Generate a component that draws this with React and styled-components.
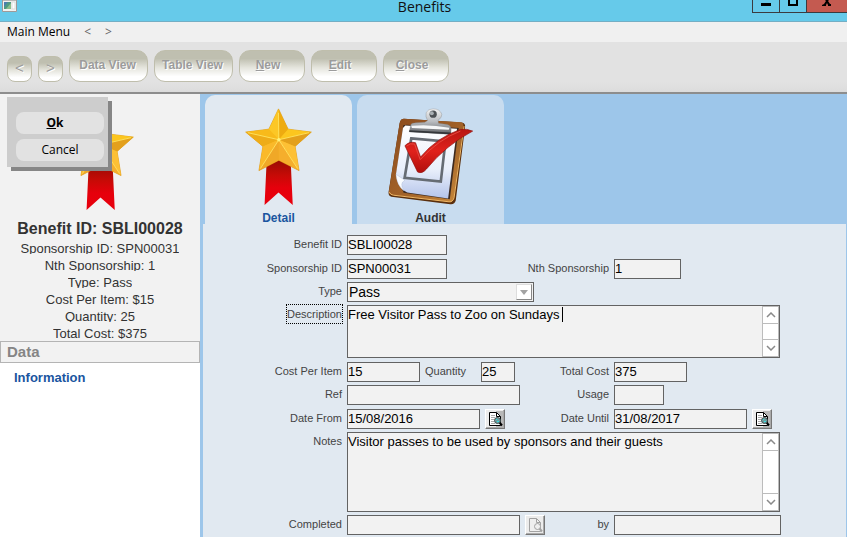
import styled, { createGlobalStyle } from "styled-components";
import React, { useState } from "react";

const GlobalStyle = createGlobalStyle`
  * { box-sizing: border-box; }
  body {
    margin: 0;
    font-family: "Liberation Sans", Arial, sans-serif;
    font-size: 13px;
    color: #111;
  }
  button, input, select, textarea { font-family: inherit; margin: 0; }
`;

function StarIcon() {
  return (
    <svg width="67" height="98" viewBox="130 55 202 294" aria-hidden="true">
      <defs>
        <linearGradient id="ribbon" x1="0" y1="0" x2="0" y2="1">
          <stop offset="0" stopColor="#8e0d04" />
          <stop offset="0.4" stopColor="#c80a06" />
          <stop offset="0.65" stopColor="#e6000c" />
          <stop offset="1" stopColor="#e8000d" />
        </linearGradient>
        <linearGradient id="gold" x1="0" y1="0" x2="0" y2="1">
          <stop offset="0" stopColor="#f5b914" />
          <stop offset="0.5" stopColor="#fbc01c" />
          <stop offset="1" stopColor="#ee9f22" />
        </linearGradient>
      </defs>
      <path d="M196 200 L267 200 L274 347 L231 309 L189 347 Z" fill="url(#ribbon)" />
      <path
        d="M231 57 L260 118 L330 127 L281 170 L293 243 L232 212 L172 243 L184 170 L132 127 L202 118 Z"
        fill="url(#gold)"
        stroke="#d9940f"
        strokeWidth="2"
        strokeLinejoin="round"
      />
      <path d="M231 57 L260 118 L232 150 Z" fill="#eeab10" />
      <path d="M231 57 L202 118 L232 150 Z" fill="#fcc726" />
      <path d="M132 127 L202 118 L232 150 Z" fill="#f8ba1a" />
      <path d="M132 127 L184 170 L232 150 Z" fill="#eeac18" />
      <path d="M330 127 L260 118 L232 150 Z" fill="#fcc61e" />
      <path d="M330 127 L281 170 L232 150 Z" fill="#e3a01c" />
      <path d="M172 243 L184 170 L232 150 Z" fill="#fab92a" />
      <path d="M172 243 L232 212 L232 150 Z" fill="#f0a827" />
      <path d="M293 243 L281 170 L232 150 Z" fill="#fdc035" />
      <path d="M293 243 L232 212 L232 150 Z" fill="#f5ae2c" />
      <g stroke="#ffe868" strokeWidth="2.5" strokeLinecap="round">
        <path d="M232 150 L231 70 M232 150 L140 129 M232 150 L322 129 M232 150 L177 236 M232 150 L288 236" />
      </g>
      <circle cx="232" cy="150" r="5" fill="#fff37a" />
    </svg>
  );
}

function ClipboardIcon() {
  return (
    <svg width="85" height="98" viewBox="118 52 256 294" aria-hidden="true">
      <defs>
        <linearGradient id="board" x1="0" y1="0" x2="1" y2="1">
          <stop offset="0" stopColor="#8a4a1c" />
          <stop offset="0.6" stopColor="#a5652a" />
          <stop offset="1" stopColor="#c98a3c" />
        </linearGradient>
        <linearGradient id="paper" x1="0" y1="0" x2="0" y2="1">
          <stop offset="0" stopColor="#ffffff" />
          <stop offset="0.6" stopColor="#e9effb" />
          <stop offset="1" stopColor="#b4c4ea" />
        </linearGradient>
        <linearGradient id="metal" x1="0" y1="0" x2="0" y2="1">
          <stop offset="0" stopColor="#f4f4f4" />
          <stop offset="0.5" stopColor="#b9bcc0" />
          <stop offset="1" stopColor="#5d6064" />
        </linearGradient>
        <linearGradient id="tick" x1="0" y1="0" x2="0" y2="1">
          <stop offset="0" stopColor="#b81712" />
          <stop offset="0.5" stopColor="#e0221c" />
          <stop offset="1" stopColor="#b10f0d" />
        </linearGradient>
      </defs>
      <path
        d="M166 84 L340 95 Q352 97 350 110 L322 330 Q319 342 306 341 L128 319 Q118 316 120 303 L153 97 Q156 84 166 84 Z"
        fill="#5a2f0d"
      />
      <path
        d="M166 84 L338 94 Q347 96 345 108 L316 325 Q313 336 302 334 L128 313 Q118 311 121 300 L153 97 Q156 84 166 84 Z"
        fill="url(#board)"
      />
      <path d="M122 305 Q126 313 134 314 L302 334 Q313 335 317 322 L347 106" fill="none" stroke="#f0b765" strokeWidth="3" />
      <path d="M175 102 L331 112 L304 326 L165 307 L143 250 L164 103 Z" fill="#3d2a20" />
      <path d="M170 104 L326 114 L299 324 L176 306 Q146 294 142 251 L163 112 Z" fill="url(#paper)" />
      <path d="M142 251 Q158 262 169 269 Q151 278 166 301 Q144 284 142 251 Z" fill="#f9fcff" stroke="#9aaac8" />
      <path d="M188 143 L291 152 L277 273 L168 262 Z" fill="none" stroke="#666c74" strokeWidth="8" />
      <path
        d="M187 101 Q190 96 202 96 L229 94 L237 89 Q230 78 233 65 Q239 54 254 54 Q274 54 280 70 Q281 81 269 88 L270 97 L297 101 Q309 104 308 118 L307 131 L182 123 Z"
        fill="url(#metal)"
        stroke="#777a7d"
      />
      <path d="M188 105 Q242 99 303 111 L301 117 L190 112 Z" fill="#f6f7f8" />
      <path d="M182 121 L307 128" stroke="#33363a" strokeWidth="5" />
      <circle cx="254" cy="70" r="11" fill="#4d5154" />
      <circle cx="250" cy="67" r="6" fill="#aab0b4" />
      <path
        d="M169 165 Q182 151 201 156 L216 199 Q265 140 336 116 Q356 113 373 121 Q293 163 234 235 Q221 251 207 244 Z"
        fill="url(#tick)"
        stroke="#8f0d0b"
        strokeWidth="2"
      />
      <path d="M174 166 Q185 156 198 160 L215 207 Q270 146 336 121" fill="none" stroke="#e5483f" strokeWidth="3" />
    </svg>
  );
}

function LookupIcon({ off }) {
  const line = off ? "#a2a2a2" : "#000";
  return (
    <svg width="16" height="16" viewBox="0 0 16 16" aria-hidden="true">
      {!off && <rect x="9" y="0" width="7" height="16" fill="#b8b8b8" />}
      <path d="M2.5 1.5 H9.5 L13.5 5.5 V14.5 H2.5 Z" fill={off ? "#efefef" : "#fff"} stroke={line} />
      <path d="M9.5 1.5 V5.5 H13.5" fill="none" stroke={line} />
      {!off && <path d="M4 4.5 H8 M4 6.5 H8 M4 8.5 H7 M4 10.5 H7 M4 12.5 H8" stroke="#a9a9a9" />}
      <path d="M12.5 11.5 L15 14.5" stroke={line} strokeWidth="2" />
      <circle cx="10.5" cy="9.5" r="3" fill={off ? "#efefef" : "#6f9c9e"} stroke={off ? line : "#3f4b4b"} />
      {!off && <path d="M9 8.5 H10 M10 10.5 H12" stroke="#35e0e0" />}
    </svg>
  );
}

function MemoField({ id, value, rows, caret }) {
  const [text, setText] = useState(value);
  return (
    <Memo>
      <MemoText id={id} $tall={rows > 3} value={text} onChange={(e) => setText(e.target.value)} />
      {caret && <Caret />}
      <Scroller>
        <ScrollButton type="button" aria-label="Scroll up">
          <svg width="10" height="6" viewBox="0 0 10 6">
            <path d="M1 5 L5 1 L9 5" fill="none" stroke="#8a8a8a" strokeWidth="1.5" />
          </svg>
        </ScrollButton>
        <ScrollButton type="button" aria-label="Scroll down">
          <svg width="10" height="6" viewBox="0 0 10 6">
            <path d="M1 1 L5 5 L9 1" fill="none" stroke="#8a8a8a" strokeWidth="1.5" />
          </svg>
        </ScrollButton>
      </Scroller>
    </Memo>
  );
}

export default function App() {
  const [tab, setTab] = useState("detail");
  return (
    <Window>
      <GlobalStyle />
      <TitleBar>
        <svg width="16" height="13" viewBox="0 0 16 13" aria-hidden="true">
          <path d="M0.5 0 V11.5 H14.5 V0" fill="#f3f3f1" stroke="#a09a98" />
          <rect x="2" y="2" width="7" height="7" fill="#4d9a83" />
          <path d="M2 2 H6 L2 7 Z" fill="#4a7fae" />
          <path d="M9 3 V9 H4 Z" fill="#8cc08c" />
          <path d="M1 0.5 H14" stroke="#b9b9b9" />
          <rect x="10" y="2" width="3" height="7" fill="#fff" stroke="#ddd" />
        </svg>
        <WindowTitle>Benefits</WindowTitle>
        <WindowButtons>
          <WindowButton aria-label="Minimise">
            <svg width="10" height="6" viewBox="0 0 10 6"><path d="M0 3 H10 V6 H0 Z" /></svg>
          </WindowButton>
          <WindowButton aria-label="Maximise">
            <svg width="10" height="6" viewBox="0 0 10 6"><path d="M1 0 V5 H9 V0" fill="none" stroke="#000" strokeWidth="2" /></svg>
          </WindowButton>
          <WindowButton $close aria-label="Close window">
            <svg width="10" height="6" viewBox="0 0 10 6"><path d="M3 0 H7 L6 1 L8 4 H9 V6 H6 V5 L5 3 L4 5 V6 H0 V5 L2 4 L4 1 Z" /></svg>
          </WindowButton>
        </WindowButtons>
      </TitleBar>

      <MenuBar>
        <MenuButton>Main Menu</MenuButton>
        <MenuButton $dim>&lt;</MenuButton>
        <MenuButton $dim>&gt;</MenuButton>
      </MenuBar>

      <Toolbar>
        <ArrowButton>&lt;</ArrowButton>
        <ArrowButton>&gt;</ArrowButton>
        <ToolButton $wide>Data View</ToolButton>
        <ToolButton $wide>Table View</ToolButton>
        <ToolButton><u>N</u>ew</ToolButton>
        <ToolButton><u>E</u>dit</ToolButton>
        <ToolButton><u>C</u>lose</ToolButton>
      </Toolbar>

      <Body>
        <Sidebar>
          <Summary>
            <StarIcon />
            <SummaryTitle>Benefit ID: SBLI00028</SummaryTitle>
            <SummaryLine>Sponsorship ID: SPN00031</SummaryLine>
            <SummaryLine>Nth Sponsorship: 1</SummaryLine>
            <SummaryLine>Type: Pass</SummaryLine>
            <SummaryLine>Cost Per Item: $15</SummaryLine>
            <SummaryLine>Quantity: 25</SummaryLine>
            <SummaryLine>Total Cost: $375</SummaryLine>
          </Summary>
          <SideHeading>Data</SideHeading>
          <SideLink href="#information">Information</SideLink>
          <Confirm>
            <ConfirmButton $strong><u>O</u>k</ConfirmButton>
            <ConfirmButton>Cancel</ConfirmButton>
          </Confirm>
        </Sidebar>

        <Main>
          <Tabs>
            <Tab $active={tab === "detail"} onClick={() => setTab("detail")}>
              <StarIcon />
              Detail
            </Tab>
            <Tab $active={tab === "audit"} onClick={() => setTab("audit")}>
              <ClipboardIcon />
              Audit
            </Tab>
          </Tabs>

          <Form onSubmit={(e) => e.preventDefault()}>
            <Group>
              <Row>
                <Label htmlFor="benefit">Benefit ID</Label>
                <Cell><Field id="benefit" $size="m" defaultValue="SBLI00028" /></Cell>
              </Row>
            </Group>

            <Group>
              <Row>
                <Label htmlFor="sponsorship">Sponsorship ID</Label>
                <Cell>
                  <Field id="sponsorship" $size="m" defaultValue="SPN00031" />
                  <Label $end htmlFor="nth">Nth Sponsorship</Label>
                </Cell>
                <Cell><Field id="nth" $size="n" defaultValue="1" /></Cell>
              </Row>
              <Row>
                <Label htmlFor="type">Type</Label>
                <Cell>
                  <SelectBox>
                    <Select id="type" defaultValue="Pass">
                      <option>Pass</option>
                    </Select>
                    <SelectArrow>
                      <svg width="8" height="5" viewBox="0 0 8 5"><path d="M0 0 H8 L4 5 Z" fill="#a3a3a3" /></svg>
                    </SelectArrow>
                  </SelectBox>
                </Cell>
              </Row>
              <Row>
                <Label $focus htmlFor="description">Description</Label>
                <MemoField id="description" rows={3} caret value="Free Visitor Pass to Zoo on Sundays" />
              </Row>
            </Group>

            <Group>
              <Row>
                <Label htmlFor="cost">Cost Per Item</Label>
                <Cell>
                  <Field id="cost" $size="s" defaultValue="15" />
                  <Label $mid htmlFor="quantity">Quantity</Label>
                  <Field id="quantity" $size="xxs" defaultValue="25" />
                  <Label $end htmlFor="total">Total Cost</Label>
                </Cell>
                <Cell><Field id="total" $size="s" defaultValue="375" /></Cell>
              </Row>
              <Row>
                <Label htmlFor="ref">Ref</Label>
                <Cell>
                  <Field id="ref" $size="xl" />
                  <Label $end htmlFor="usage">Usage</Label>
                </Cell>
                <Cell><Field id="usage" $size="xs" /></Cell>
              </Row>
            </Group>

            <Group>
              <Row>
                <Label htmlFor="from">Date From</Label>
                <Cell>
                  <Field id="from" $size="l" defaultValue="15/08/2016" />
                  <Lookup type="button" aria-label="Look up start date"><LookupIcon /></Lookup>
                  <Label $end htmlFor="until">Date Until</Label>
                </Cell>
                <Cell>
                  <Field id="until" $size="l" defaultValue="31/08/2017" />
                  <Lookup type="button" aria-label="Look up end date"><LookupIcon /></Lookup>
                </Cell>
              </Row>
              <Row>
                <Label htmlFor="notes">Notes</Label>
                <MemoField id="notes" rows={5} value="Visitor passes to be used by sponsors and their guests" />
              </Row>
              <Row>
                <Label htmlFor="completed">Completed</Label>
                <Cell>
                  <Field id="completed" $size="xl" />
                  <Lookup type="button" disabled aria-label="Look up completion date"><LookupIcon off /></Lookup>
                  <Label $end htmlFor="by">by</Label>
                </Cell>
                <Cell><Field id="by" $size="by" /></Cell>
              </Row>
            </Group>
          </Form>
        </Main>
      </Body>
    </Window>
  );
}

const uiFont = `"Open Sans", "Noto Sans", sans-serif`;

const fieldWidths = {
  xxs: "34px",
  xs: "50px",
  n: "67px",
  s: "73px",
  m: "100px",
  l: "133px",
  by: "167px",
  xl: "173px",
};

const Window = styled.div`
  display: flex;
  flex-direction: column;
  min-height: 100vh;
`;

const TitleBar = styled.header`
  display: grid;
  grid-template-columns: 1fr auto 1fr;
  align-items: start;
  height: 22px;
  padding-left: 2px;
  background: #66caea;
  border-bottom: 1px solid #74aec4;
`;

const WindowTitle = styled.h1`
  margin: 0;
  font: 14px/14px ${uiFont};
`;

const WindowButtons = styled.div`
  display: flex;
  justify-content: flex-end;
`;

const WindowButton = styled.button`
  display: flex;
  justify-content: center;
  width: ${(p) => (p.$close ? "41px" : "27px")};
  height: 13px;
  padding: 0;
  background: ${(p) => (p.$close ? "#c45a50" : "transparent")};
  border: solid #3b3b3f;
  border-width: 0 0 1px 1px;
`;

const MenuBar = styled.nav`
  display: flex;
  align-items: center;
  gap: 14px;
  height: 20px;
  padding-left: 7px;
  background: #f0f0f0;
`;

const MenuButton = styled.button`
  padding: 0;
  border: 0;
  background: none;
  font: 12px/18px ${uiFont};
  color: ${(p) => (p.$dim ? "#666" : "#000")};
`;

const Toolbar = styled.div`
  display: flex;
  align-items: flex-end;
  gap: 6px;
  height: 52px;
  padding: 0 7px 10px;
  background: linear-gradient(#e2e2e2 80%, #dcdcdc);
  border-bottom: 2px solid #8d8d8d;
`;

const ToolButton = styled.button`
  width: ${(p) => (p.$wide ? "79px" : "66px")};
  height: 32px;
  padding: 0 ${(p) => (p.$wide ? "2px" : "8px")} 2px 0;
  border: 1px solid #bfbeac;
  border-radius: 11px;
  background: linear-gradient(#bfbfb0 25%, #e4e4dc 55%, #fff 85%);
  font-size: 12px;
  font-weight: bold;
  color: #9c9c9c;
  text-shadow: 1px 1px 0 #fff;
`;

const ArrowButton = styled(ToolButton)`
  width: 25px;
  height: 26px;
  padding: 0 0 4px;
  border-radius: 8px;
  font-size: 15px;
  font-weight: normal;
`;

const Body = styled.div`
  display: flex;
  flex: 1;
`;

const Sidebar = styled.aside`
  position: relative;
  flex: 0 0 200px;
  background: #fff;
`;

const Summary = styled.section`
  display: flex;
  flex-direction: column;
  align-items: center;
  gap: 3px;
  padding: 19px 0 2px;
  background: #f2f2f2;
  color: #333;
`;

const SummaryTitle = styled.h2`
  margin: 6px 0 0;
  font-size: 16px;
  line-height: 17px;
`;

const SummaryLine = styled.p`
  height: 14px;
  margin: 0;
  overflow: hidden;
  line-height: 18px;
`;

const SideHeading = styled.h3`
  margin: 0;
  padding: 0 6px;
  border: 1px solid #b4b4b4;
  background: #f2f2f2;
  font-size: 15px;
  line-height: 20px;
  color: #858585;
`;

const SideLink = styled.a`
  display: block;
  padding: 6px 14px;
  font-weight: bold;
  line-height: 18px;
  color: #1a559f;
  text-decoration: none;
`;

const Confirm = styled.div`
  position: absolute;
  top: 3px;
  left: 7px;
  display: flex;
  flex-direction: column;
  gap: 5px;
  width: 101px;
  padding: 15px 4px 6px 9px;
  background: #cdcdcd;
  box-shadow: 4px 4px 0 #868686;
`;

const ConfirmButton = styled.button`
  height: 22px;
  padding: 0;
  border: 0;
  border-radius: 8px;
  background: #e2e2e2;
  font: ${(p) => (p.$strong ? "bold 12px" : "12px")}/20px ${uiFont};
  padding-right: ${(p) => (p.$strong ? "10px" : "0")};
  color: #000;
`;

const Main = styled.main`
  display: flex;
  flex: 1;
  flex-direction: column;
  padding: 1px 1px 0 3px;
  background: #9dc6ea;
`;

const Tabs = styled.div`
  display: flex;
  gap: 5px;
  padding-left: 2px;
`;

const Tab = styled.button`
  display: flex;
  flex-direction: column;
  align-items: center;
  gap: 6px;
  width: 147px;
  padding: 13px 0 0;
  border: 0;
  border-radius: 10px 10px 0 0;
  background: ${(p) => (p.$active ? "#e1e9f1" : "#c8dcef")};
  font-size: 12px;
  font-weight: bold;
  line-height: 12px;
  color: ${(p) => (p.$active ? "#1a559f" : "#333")};
`;

const Form = styled.form`
  display: flex;
  flex: 1;
  flex-direction: column;
  gap: 4px;
  padding-top: 11px;
  background: #e1e9f1;
`;

const Group = styled.div`
  display: flex;
  flex-direction: column;
  gap: 3px;
`;

const Row = styled.div`
  display: grid;
  grid-template-columns: 139px 262px 1fr;
  gap: 5px;
  align-items: start;
`;

const Cell = styled.div`
  display: flex;
  gap: 5px;
`;

const Label = styled.label`
  justify-self: end;
  margin-left: ${(p) => (p.$end ? "auto" : "0")};
  width: ${(p) => (p.$mid ? "51px" : "auto")};
  font-size: 11px;
  line-height: 18px;
  white-space: nowrap;
  color: #444;
  outline: ${(p) => (p.$focus ? "1px dotted #000" : "none")};
`;

const Field = styled.input`
  width: ${(p) => fieldWidths[p.$size]};
  height: 20px;
  padding: 0 0 1px;
  border: 1px solid #636363;
  background: #f2f2f2;
  font-size: 13px;
  color: #000;
`;

const SelectBox = styled.div`
  position: relative;
  width: 187px;
`;

const Select = styled.select`
  appearance: none;
  display: block;
  width: 100%;
  height: 20px;
  padding: 0 1px;
  border: 1px solid #636363;
  border-radius: 0;
  background: #f2f2f2;
  font-size: 14px;
  color: #000;
`;

const SelectArrow = styled.span`
  position: absolute;
  top: 2px;
  right: 2px;
  display: flex;
  align-items: center;
  justify-content: center;
  width: 16px;
  height: 16px;
  border: 1px solid;
  border-color: #ddd #888 #888 #ddd;
  background: #fff;
  pointer-events: none;
`;

const Memo = styled.div`
  position: relative;
  display: flex;
  grid-column: 2 / -1;
  max-width: 433px;
  border: 1px solid #636363;
  background: #f2f2f2;
`;

const MemoText = styled.textarea`
  flex: 1;
  height: ${(p) => (p.$tall ? "78px" : "51px")};
  padding: 0;
  border: 0;
  outline: 0;
  resize: none;
  background: transparent;
  font-size: 13px;
  line-height: 17px;
  color: #000;
`;

const Caret = styled.span`
  position: absolute;
  top: 1px;
  left: 214px;
  width: 1px;
  height: 15px;
  background: #000;
`;

const Scroller = styled.div`
  display: flex;
  flex-direction: column;
  justify-content: space-between;
  width: 17px;
  border: 1px solid #bcbcbc;
  background: #fff;
`;

const ScrollButton = styled.button`
  display: flex;
  align-items: center;
  justify-content: center;
  height: 16px;
  padding: 0;
  border: 0;
  background: #fff;
  box-shadow: 0 0 0 1px #bcbcbc;
`;

const Lookup = styled.button`
  display: flex;
  align-items: center;
  justify-content: center;
  width: 20px;
  height: 20px;
  padding: 0;
  border: 1px solid;
  border-color: #fff #777 #777 #fff;
  background: #ececec;
  box-shadow: inset -1px -1px 0 #aaa;
`;
